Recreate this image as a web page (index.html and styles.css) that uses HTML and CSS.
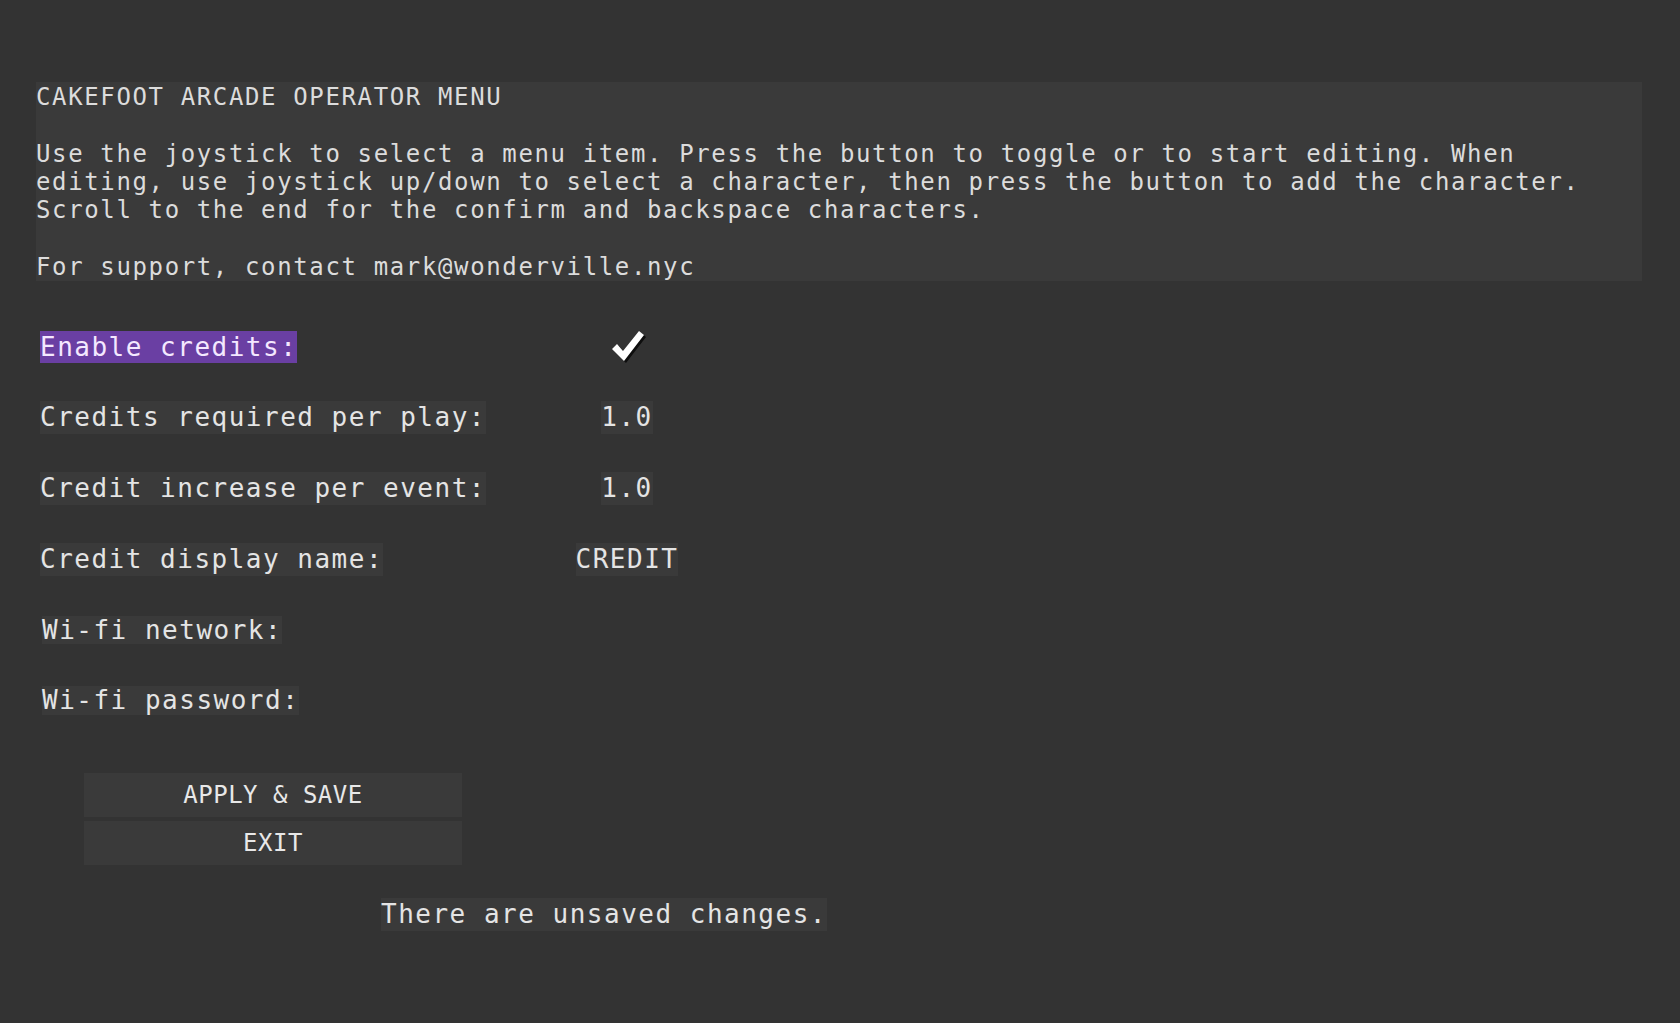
FILE: index.html
```html
<!DOCTYPE html>
<html>
<head>
<meta charset="utf-8">
<title>Cakefoot Arcade Operator Menu</title>
<link rel="stylesheet" href="styles.css">
</head>
<body>
<div class="page">
  <div class="header">
    <p class="line">CAKEFOOT ARCADE OPERATOR MENU</p>
    <p class="line">Use the joystick to select a menu item. Press the button to toggle or to start editing. When<br>editing, use joystick up/down to select a character, then press the button to add the character.<br>Scroll to the end for the confirm and backspace characters.</p>
    <p class="line">For support, contact mark@wonderville.nyc</p>
  </div>

  <div class="menu">
    <div class="cell"><span class="label selected">Enable credits:</span></div>
    <div class="cell value-cell">
      <svg class="check" width="37" height="35" viewBox="0 0 37 35">
        <polygon points="3,21 8,16 14,23 30,3 35,7 15,33" fill="#0e0e0e"/>
        <polygon points="1,19 6,14 12,21 28,1 33,5 13,31" fill="#ffffff"/>
      </svg>
    </div>

    <div class="cell"><span class="label">Credits required per play:</span></div>
    <div class="cell value-cell"><span class="label">1.0</span></div>

    <div class="cell"><span class="label">Credit increase per event:</span></div>
    <div class="cell value-cell"><span class="label">1.0</span></div>

    <div class="cell"><span class="label">Credit display name:</span></div>
    <div class="cell value-cell"><span class="label">CREDIT</span></div>

    <div class="cell"><span class="label wifi">Wi-fi network:</span></div>
    <div class="cell value-cell"></div>

    <div class="cell"><span class="label wifi">Wi-fi password:</span></div>
    <div class="cell value-cell"></div>
  </div>

  <div class="buttons">
    <div class="button">APPLY &amp; SAVE</div>
    <div class="button">EXIT</div>
  </div>

  <div class="status"><span class="label">There are unsaved changes.</span></div>
</div>
</body>
</html>
```

FILE: styles.css
```css
html, body {
  margin: 0;
  padding: 0;
  background: #333333;
}

body {
  font-family: "DejaVu Sans Mono", "Liberation Mono", monospace;
  color: #e6e6e6;
}

.page {
  padding: 82px 38px 0 36px;
}

.header {
  background: #3a3a3a;
  font-size: 24px;
  letter-spacing: 1.63px;
  line-height: 28.25px;
  color: #dcdcdc;
  white-space: nowrap;
  padding-top: 1px;
}

.header .line {
  margin: 0 0 28.25px 0;
}

.header .line:last-child {
  margin-bottom: 0;
}

.menu {
  margin-top: 50px;
  margin-left: 4px;
  display: grid;
  grid-template-columns: 460px 254px;
  grid-auto-rows: 32.7px;
  row-gap: 38px;
}

.cell {
  display: flex;
  align-items: center;
}

.value-cell {
  justify-content: center;
}

.label {
  display: inline-block;
  font-size: 26px;
  letter-spacing: 1.5px;
  line-height: 32.7px;
  background: #3a3a3a;
  color: #e4e4e4;
  white-space: nowrap;
}

.label.selected {
  background: #6a3fa3;
  color: #f4e8ff;
}

.label.wifi {
  margin-left: 2px;
  line-height: 28.5px;
}

.check {
  display: block;
  margin-left: 4px;
}

.buttons {
  margin-top: 56px;
  margin-left: 48px;
  width: 378px;
  display: flex;
  flex-direction: column;
  gap: 4px;
}

.button {
  height: 44px;
  background: #3a3a3a;
  display: flex;
  align-items: center;
  justify-content: center;
  font-size: 24px;
  letter-spacing: 0.5px;
  color: #e8e8e8;
}

.status {
  margin-top: 33px;
  margin-left: 345px;
}
```
